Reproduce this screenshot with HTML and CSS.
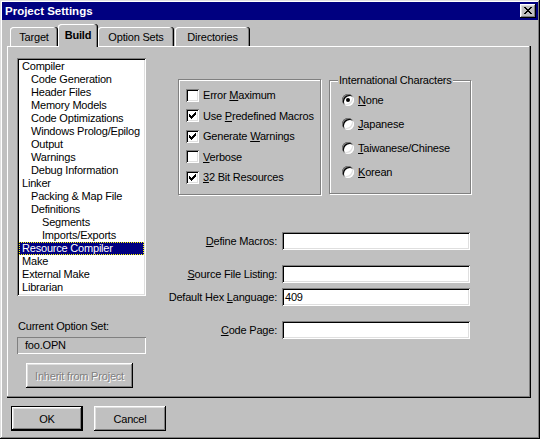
FILE: index.html
```html
<!DOCTYPE html>
<html>
<head>
<meta charset="utf-8">
<title>Project Settings</title>
<link rel="stylesheet" href="styles.css">
</head>
<body>
<div class="window">
  <div class="titlebar">
    <span class="title">Project Settings</span>
    <span class="close-btn">
      <svg width="8" height="7" viewBox="0 0 8 7" shape-rendering="crispEdges"><path fill="#000" d="M0 0h2v1h-2z M6 0h2v1h-2z M1 1h2v1h-2z M5 1h2v1h-2z M2 2h4v1h-4z M3 3h2v1h-2z M2 4h4v1h-4z M1 5h2v1h-2z M5 5h2v1h-2z M0 6h2v1h-2z M6 6h2v1h-2z"/></svg>
    </span>
  </div>

  <div class="tabs">
    <div class="tab tab-target">Target</div>
    <div class="tab tab-build selected">Build</div>
    <div class="tab tab-options">Option Sets</div>
    <div class="tab tab-dirs">Directories</div>
  </div>

  <div class="panel">
    <div class="left-col">
      <div class="listbox">
        <div class="item l0">Compiler</div>
        <div class="item l1">Code Generation</div>
        <div class="item l1">Header Files</div>
        <div class="item l1">Memory Models</div>
        <div class="item l1">Code Optimizations</div>
        <div class="item l1">Windows Prolog/Epilog</div>
        <div class="item l1">Output</div>
        <div class="item l1">Warnings</div>
        <div class="item l1">Debug Information</div>
        <div class="item l0">Linker</div>
        <div class="item l1">Packing &amp; Map File</div>
        <div class="item l1">Definitions</div>
        <div class="item l2">Segments</div>
        <div class="item l2">Imports/Exports</div>
        <div class="item l0 selected">Resource Compiler</div>
        <div class="item l0">Make</div>
        <div class="item l0">External Make</div>
        <div class="item l0">Librarian</div>
      </div>
      <div class="caption">Current Option Set:</div>
      <div class="static-field">foo.OPN</div>
      <div class="btn disabled inherit">Inherit from Project</div>
    </div>

    <div class="right-col">
      <div class="groups">
        <div class="group checks">
          <div class="check-row"><span class="checkbox"></span><span>Error <u>M</u>aximum</span></div>
          <div class="check-row"><span class="checkbox checked"><svg width="7" height="7" viewBox="0 0 7 7" shape-rendering="crispEdges"><path fill="#000" d="M6 0h1v1h-1z M5 1h2v1h-2z M0 2h1v1h-1z M4 2h3v1h-3z M0 3h2v1h-2z M3 3h3v1h-3z M0 4h5v1h-5z M1 5h3v1h-3z M2 6h1v1h-1z"/></svg></span><span>Use <u>P</u>redefined Macros</span></div>
          <div class="check-row"><span class="checkbox checked"><svg width="7" height="7" viewBox="0 0 7 7" shape-rendering="crispEdges"><path fill="#000" d="M6 0h1v1h-1z M5 1h2v1h-2z M0 2h1v1h-1z M4 2h3v1h-3z M0 3h2v1h-2z M3 3h3v1h-3z M0 4h5v1h-5z M1 5h3v1h-3z M2 6h1v1h-1z"/></svg></span><span>Generate <u>W</u>arnings</span></div>
          <div class="check-row"><span class="checkbox"></span><span><u>V</u>erbose</span></div>
          <div class="check-row"><span class="checkbox checked"><svg width="7" height="7" viewBox="0 0 7 7" shape-rendering="crispEdges"><path fill="#000" d="M6 0h1v1h-1z M5 1h2v1h-2z M0 2h1v1h-1z M4 2h3v1h-3z M0 3h2v1h-2z M3 3h3v1h-3z M0 4h5v1h-5z M1 5h3v1h-3z M2 6h1v1h-1z"/></svg></span><span><u>3</u>2 Bit Resources</span></div>
        </div>
        <div class="group radios">
          <span class="group-title">International Characters</span>
          <div class="radio-row"><span class="radio on"></span><span><u>N</u>one</span></div>
          <div class="radio-row"><span class="radio"></span><span><u>J</u>apanese</span></div>
          <div class="radio-row"><span class="radio"></span><span><u>T</u>aiwanese/Chinese</span></div>
          <div class="radio-row"><span class="radio"></span><span><u>K</u>orean</span></div>
        </div>
      </div>

      <div class="fields">
        <div class="field-row"><span class="field-label"><u>D</u>efine Macros:</span><span class="input"></span></div>
        <div class="field-row"><span class="field-label"><u>S</u>ource File Listing:</span><span class="input"></span></div>
        <div class="field-row tight"><span class="field-label">Default Hex <u>L</u>anguage:</span><span class="input">409</span></div>
        <div class="field-row"><span class="field-label"><u>C</u>ode Page:</span><span class="input"></span></div>
      </div>
    </div>
  </div>

  <div class="buttons">
    <div class="btn default">OK</div>
    <div class="btn">Cancel</div>
  </div>
</div>
</body>
</html>
```

FILE: styles.css
```css
* { box-sizing: border-box; }

html, body {
  margin: 0;
  padding: 0;
  background: #c0c0c0;
}

body {
  font-family: "Liberation Sans", Arial, sans-serif;
  font-size: 11px;
  letter-spacing: -0.2px;
  color: #000;
}

u { text-decoration: underline; text-underline-offset: 1px; }

.window {
  width: 540px;
  height: 439px;
  padding: 2px;
  background: #c0c0c0;
  display: flex;
  flex-direction: column;
  box-shadow: inset -1px -1px #000, inset 1px 1px #dfdfdf, inset -2px -2px #808080, inset 2px 2px #fff;
}

/* title bar */
.titlebar {
  height: 18px;
  flex: none;
  background: #000080;
  color: #fff;
  display: flex;
  align-items: center;
  justify-content: space-between;
  padding: 0 2px 0 3px;
}
.title {
  font-weight: bold;
  font-size: 11.5px;
  letter-spacing: 0;
}
.close-btn {
  width: 16px;
  height: 14px;
  background: #c0c0c0;
  display: flex;
  align-items: center;
  justify-content: center;
  box-shadow: inset -1px -1px #000, inset 1px 1px #fff, inset -2px -2px #808080, inset 2px 2px #dfdfdf;
}
.close-btn svg { display: block; margin: 0 1px 1px 0; }

/* tabs */
.tabs {
  flex: none;
  height: 26px;
  margin-left: 8px;
  display: flex;
  align-items: flex-end;
  position: relative;
  z-index: 1;
}
.tab {
  height: 19px;
  display: flex;
  align-items: center;
  justify-content: center;
  background: #c0c0c0;
  border-radius: 3px 3px 0 0;
  box-shadow: inset -1px 0 #000, inset -2px 0 #808080, inset 1px 1px #fff;
  white-space: nowrap;
}
.tab.selected {
  height: 23px;
  margin-bottom: -1px;
  font-weight: bold;
  padding-bottom: 1px;
}
.tab-target { width: 48px; }
.tab-build { width: 40px; }
.tab-options { width: 76px; }
.tab-dirs { width: 75px; margin-left: 1px; }

/* panel */
.panel {
  flex: none;
  margin-left: 5px;
  width: 524px;
  height: 352px;
  padding: 12px 0 0 10px;
  display: grid;
  grid-template-columns: 129px 1fr;
  column-gap: 32px;
  align-items: start;
  box-shadow: inset -1px -1px #000, inset -2px -2px #808080, inset 1px 1px #fff;
}

.left-col {
  display: flex;
  flex-direction: column;
  align-items: flex-start;
}

.listbox {
  width: 129px;
  height: 238px;
  padding: 2px;
  background: #fff;
  box-shadow: inset 1px 1px #808080, inset -1px -1px #fff, inset 2px 2px #000, inset -2px -2px #dfdfdf;
}
.item {
  height: 13px;
  line-height: 13px;
  white-space: nowrap;
}
.item.l0 { padding-left: 3px; }
.item.l1 { padding-left: 12px; }
.item.l2 { padding-left: 23px; }
.item.selected {
  background: #000080;
  color: #fff;
  outline: 1px dotted #ffff00;
  outline-offset: -1px;
}

.caption {
  margin-top: 24px;
  line-height: 13px;
  padding-left: 1px;
}
.static-field {
  margin-top: 4px;
  width: 129px;
  height: 17px;
  line-height: 17px;
  padding-left: 8px;
  box-shadow: inset 1px 1px #808080, inset -1px -1px #fff;
}

.btn {
  display: flex;
  align-items: center;
  justify-content: center;
  background: #c0c0c0;
  height: 25px;
  box-shadow: inset -1px -1px #000, inset 1px 1px #fff, inset -2px -2px #808080, inset 2px 2px #dfdfdf;
  white-space: nowrap;
}
.btn.inherit {
  margin: 9px 0 0 9px;
  width: 107px;
}
.btn.disabled {
  color: #808080;
  text-shadow: 1px 1px 0 #fff;
}
.btn.default {
  box-shadow: inset 0 0 0 1px #000, inset -2px -2px #000, inset 2px 2px #fff, inset -3px -3px #808080, inset 3px 3px #dfdfdf;
}

/* right column */
.right-col {
  padding-top: 21px;
}
.groups {
  display: flex;
  gap: 8px;
  align-items: flex-start;
}
.group {
  position: relative;
  border: 1px solid #808080;
  box-shadow: inset 1px 1px #fff, 1px 1px #fff;
}
.checks {
  width: 143px;
  height: 116px;
  padding: 5px 0 0 7px;
}
.check-row {
  height: 20.5px;
  display: flex;
  align-items: center;
  gap: 4px;
  white-space: nowrap;
}
.checkbox {
  width: 13px;
  height: 13px;
  flex: none;
  background: #fff;
  padding: 3px;
  display: flex;
  box-shadow: inset 1px 1px #808080, inset -1px -1px #fff, inset 2px 2px #000, inset -2px -2px #dfdfdf;
}
.checkbox svg { display: block; }

.radios {
  width: 142px;
  height: 114px;
  margin-top: 1px;
  padding: 7px 0 0 12px;
}
.group-title {
  position: absolute;
  top: -7px;
  left: 8px;
  padding: 0 1px;
  line-height: 13px;
  background: #c0c0c0;
  white-space: nowrap;
}
.radio-row {
  height: 24px;
  display: flex;
  align-items: center;
  gap: 4px;
  white-space: nowrap;
}
.radio {
  width: 12px;
  height: 12px;
  flex: none;
  border-radius: 50%;
  background: #fff;
  position: relative;
  box-shadow: inset 1px 1px #808080, inset -1px -1px #fff, inset 2px 2px #000, inset -2px -2px #dfdfdf;
}
.radio.on::after {
  content: "";
  position: absolute;
  left: 4px;
  top: 4px;
  width: 4px;
  height: 4px;
  border-radius: 50%;
  background: #000;
}

.fields {
  margin-top: 37px;
  margin-left: -20px;
}
.field-row {
  display: flex;
  align-items: center;
  gap: 5px;
  height: 18px;
}
.field-row + .field-row { margin-top: 15px; }
.field-row.tight { margin-top: 5px; }
.field-label {
  width: 119px;
  text-align: right;
  white-space: nowrap;
}
.input {
  width: 188px;
  height: 18px;
  line-height: 18px;
  padding-left: 3px;
  background: #fff;
  box-shadow: inset 1px 1px #808080, inset -1px -1px #fff, inset 2px 2px #000, inset -2px -2px #dfdfdf;
}

/* bottom buttons */
.buttons {
  flex: none;
  margin-top: 8px;
  padding-left: 9px;
  display: flex;
  gap: 11px;
}
.buttons .btn { width: 72px; }
```
